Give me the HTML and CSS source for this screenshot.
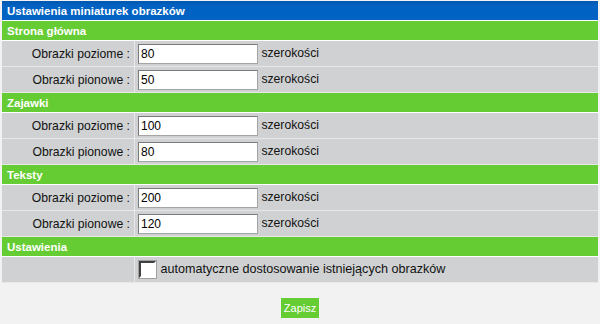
FILE: index.html
```html
<!DOCTYPE html>
<html lang="pl">
<head>
    <meta charset="UTF-8">
    <title>Ustawienia miniaturek</title>
    <link rel="stylesheet" href="styles.css">
</head>
<body>
    <form class="settings">
        <table class="grid">
            <tr><th colspan="2" class="title">Ustawienia miniaturek obrazków</th></tr>

            <tr><th colspan="2" class="section">Strona główna</th></tr>
            <tr>
                <td class="label">Obrazki poziome :</td>
                <td class="field"><input type="text" value="80"> szerokości</td>
            </tr>
            <tr>
                <td class="label">Obrazki pionowe :</td>
                <td class="field"><input type="text" value="50"> szerokości</td>
            </tr>

            <tr><th colspan="2" class="section">Zajawki</th></tr>
            <tr>
                <td class="label">Obrazki poziome :</td>
                <td class="field"><input type="text" value="100"> szerokości</td>
            </tr>
            <tr>
                <td class="label">Obrazki pionowe :</td>
                <td class="field"><input type="text" value="80"> szerokości</td>
            </tr>

            <tr><th colspan="2" class="section">Teksty</th></tr>
            <tr>
                <td class="label">Obrazki poziome :</td>
                <td class="field"><input type="text" value="200"> szerokości</td>
            </tr>
            <tr>
                <td class="label">Obrazki pionowe :</td>
                <td class="field"><input type="text" value="120"> szerokości</td>
            </tr>

            <tr><th colspan="2" class="section">Ustawienia</th></tr>
            <tr>
                <td class="label"></td>
                <td class="field option"><span class="check"></span> automatyczne dostosowanie istniejących obrazków</td>
            </tr>
        </table>
        <div class="actions">
            <button type="button">Zapisz</button>
        </div>
    </form>
</body>
</html>
```

FILE: styles.css
```css
body {
    margin: 0;
    background-color: #f2f2f2;
    font-family: 'Liberation Sans', Arial, sans-serif;
    font-size: 12px;
    color: #000;
}
.settings {
    padding: 1px 2px 0 2px;
}
.grid {
    width: 596px;
    border-collapse: collapse;
}
.grid th {
    text-align: left;
    color: #fff;
    font-weight: bold;
    font-size: 11.5px;
    padding: 0 5px;
    height: 19px;
    border-bottom: 1px solid #fff;
}
.title {
    background-color: #0060c0;
    background-image: linear-gradient(#0058b0, #0062c2 5px);
}
.section {
    background-color: #66cc33;
}
.grid td {
    background-color: #d0d1d3;
    height: 25px;
    border-bottom: 1px solid #e8e8e8;
}
.label {
    width: 128px;
    text-align: right;
    padding: 0 4px 0 0;
    border-right: 1px solid #e8e8e8;
    font-size: 12.2px;
    color: #111;
}
.field {
    padding: 0 3px;
    font-size: 12.2px;
    color: #111;
}
.option {
    font-size: 12.6px;
}
.field input {
    width: 114px;
    height: 16px;
    padding: 1px 2px;
    border: 1px solid #a5a5a5;
    border-top-color: #7a7a7a;
    border-left-color: #7a7a7a;
    font-family: 'Liberation Sans', Arial, sans-serif;
    font-size: 12px;
    vertical-align: middle;
    margin: 0;
}
.check {
    display: inline-block;
    width: 13px;
    height: 13px;
    background-color: #fff;
    border: 2px solid;
    border-color: #404040 #fff #fff #404040;
    box-shadow: 0 0 0 1px #a0a0a0;
    vertical-align: middle;
    margin: 0 1px 0 1px;
}
.actions {
    text-align: center;
    padding-top: 15px;
}
.actions button {
    background-color: #66cc33;
    color: #fff;
    border: none;
    font-family: 'Liberation Sans', Arial, sans-serif;
    font-size: 11px;
    padding: 4px 3px;
    cursor: pointer;
}
```
